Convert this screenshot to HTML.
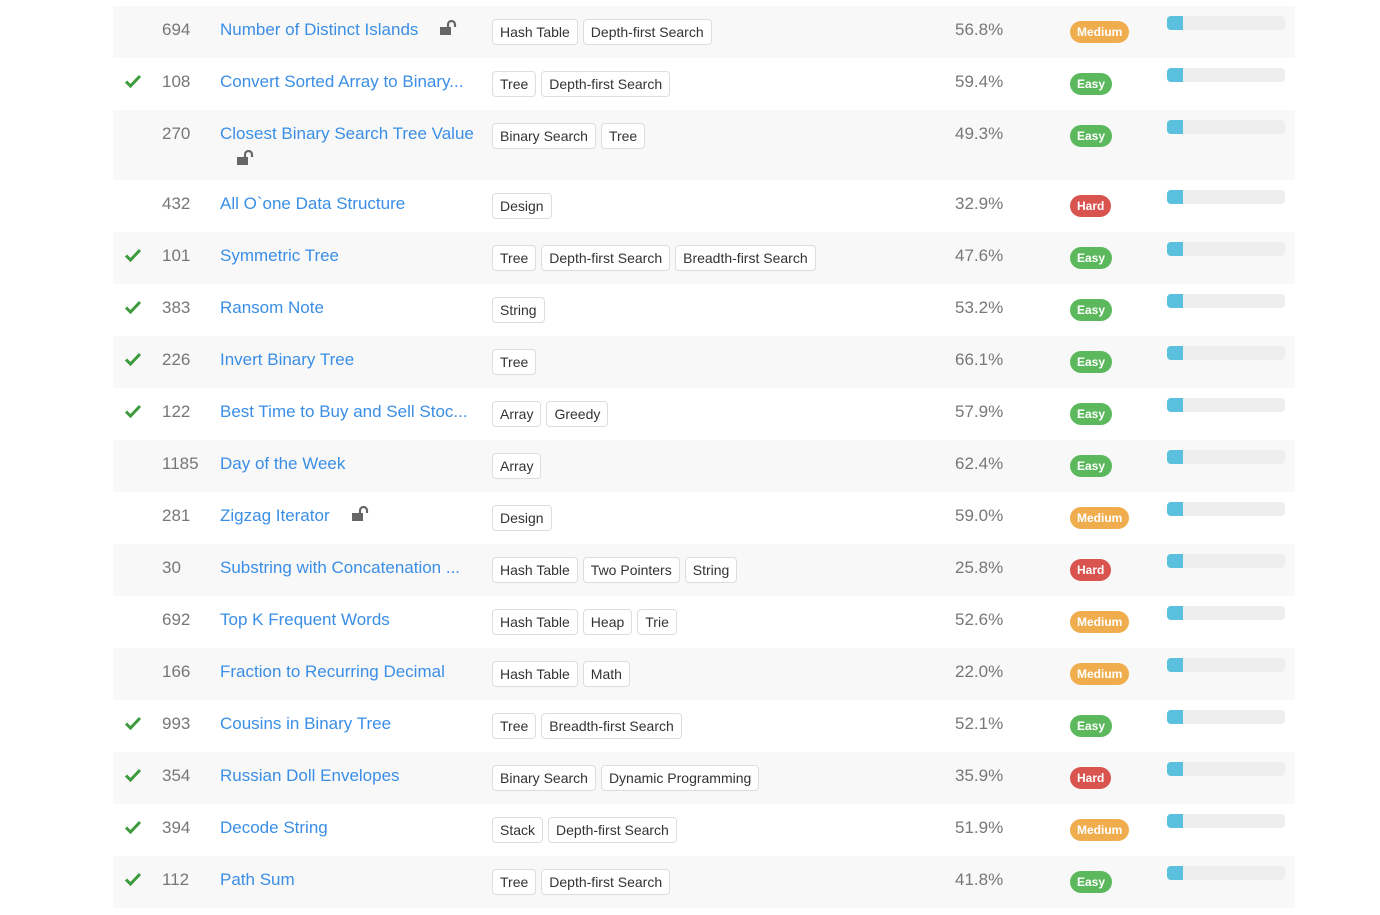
<!DOCTYPE html>
<html><head><meta charset="utf-8"><style>
body{margin:0;background:#fff;font-family:"Liberation Sans",sans-serif;width:1380px;height:915px;overflow:hidden;position:relative}
.row{position:absolute;left:113px;width:1182px;height:52px}
.row.g{background:#f8f8f8}
.chk{position:absolute;left:12px;top:16px}
.num{position:absolute;left:49px;top:14px;font-size:17px;color:#777}
.t{position:absolute;left:107px;top:14px;font-size:17px;color:#3a8ee6;white-space:nowrap}
.lk{display:inline-block;vertical-align:middle;margin-left:22px;margin-top:-6px}
.tags{position:absolute;left:379px;top:13px;display:flex;gap:5px}
.tag{height:24px;line-height:25px;border:1px solid #ddd;border-radius:4px;padding:0 7px;font-size:14px;color:#333;background:#fff}
.ac{position:absolute;left:842px;top:14px;font-size:17px;color:#777}
.b{position:absolute;left:957px;top:15px;height:22px;line-height:23px;border-radius:11px;color:#fff;font-weight:bold;font-size:12px;padding:0 7px}
.M{background:#f0ad4e}.E{background:#5cb85c}.H{background:#d9534f}
.bar{position:absolute;left:1054px;top:10px;width:118px;height:14px;background:#eee;border-radius:4px;overflow:hidden}
.bar i{display:block;width:16px;height:14px;background:#5bc0de}
</style></head><body>
<svg width="0" height="0" style="position:absolute"><defs>
<symbol id="ck" viewBox="0 0 16 14"><path d="M1 7.5l4.5 4.5L15 2" fill="none" stroke="#3c9b3c" stroke-width="3"/></symbol>
<symbol id="lk" viewBox="0 0 18 16"><rect x="0" y="7" width="11" height="8" fill="#666"/><path d="M8 7V4.5a3.5 3.5 0 0 1 7 0V7" fill="none" stroke="#666" stroke-width="2.2"/></symbol>
</defs></svg>

<div class="row g" style="top:6px"><span class="num">694</span><span class="t">Number of Distinct Islands<svg class="lk" width="18" height="16"><use href="#lk"/></svg></span><div class="tags"><span class="tag">Hash Table</span><span class="tag">Depth-first Search</span></div><span class="ac">56.8%</span><span class="b M">Medium</span><div class="bar"><i></i></div></div>

<div class="row" style="top:58px"><svg class="chk" width="16" height="14"><use href="#ck"/></svg><span class="num">108</span><span class="t">Convert Sorted Array to Binary...</span><div class="tags"><span class="tag">Tree</span><span class="tag">Depth-first Search</span></div><span class="ac">59.4%</span><span class="b E">Easy</span><div class="bar"><i></i></div></div>

<div class="row g" style="top:110px;height:70px"><span class="num">270</span><span class="t">Closest Binary Search Tree Value</span><svg style="position:absolute;left:124px;top:40px" width="18" height="16"><use href="#lk"/></svg><div class="tags"><span class="tag">Binary Search</span><span class="tag">Tree</span></div><span class="ac">49.3%</span><span class="b E">Easy</span><div class="bar"><i></i></div></div>

<div class="row" style="top:180px"><span class="num">432</span><span class="t">All O`one Data Structure</span><div class="tags"><span class="tag">Design</span></div><span class="ac">32.9%</span><span class="b H">Hard</span><div class="bar"><i></i></div></div>

<div class="row g" style="top:232px"><svg class="chk" width="16" height="14"><use href="#ck"/></svg><span class="num">101</span><span class="t">Symmetric Tree</span><div class="tags"><span class="tag">Tree</span><span class="tag">Depth-first Search</span><span class="tag">Breadth-first Search</span></div><span class="ac">47.6%</span><span class="b E">Easy</span><div class="bar"><i></i></div></div>

<div class="row" style="top:284px"><svg class="chk" width="16" height="14"><use href="#ck"/></svg><span class="num">383</span><span class="t">Ransom Note</span><div class="tags"><span class="tag">String</span></div><span class="ac">53.2%</span><span class="b E">Easy</span><div class="bar"><i></i></div></div>

<div class="row g" style="top:336px"><svg class="chk" width="16" height="14"><use href="#ck"/></svg><span class="num">226</span><span class="t">Invert Binary Tree</span><div class="tags"><span class="tag">Tree</span></div><span class="ac">66.1%</span><span class="b E">Easy</span><div class="bar"><i></i></div></div>

<div class="row" style="top:388px"><svg class="chk" width="16" height="14"><use href="#ck"/></svg><span class="num">122</span><span class="t">Best Time to Buy and Sell Stoc...</span><div class="tags"><span class="tag">Array</span><span class="tag">Greedy</span></div><span class="ac">57.9%</span><span class="b E">Easy</span><div class="bar"><i></i></div></div>

<div class="row g" style="top:440px"><span class="num">1185</span><span class="t">Day of the Week</span><div class="tags"><span class="tag">Array</span></div><span class="ac">62.4%</span><span class="b E">Easy</span><div class="bar"><i></i></div></div>

<div class="row" style="top:492px"><span class="num">281</span><span class="t">Zigzag Iterator<svg class="lk" width="18" height="16"><use href="#lk"/></svg></span><div class="tags"><span class="tag">Design</span></div><span class="ac">59.0%</span><span class="b M">Medium</span><div class="bar"><i></i></div></div>

<div class="row g" style="top:544px"><span class="num">30</span><span class="t">Substring with Concatenation ...</span><div class="tags"><span class="tag">Hash Table</span><span class="tag">Two Pointers</span><span class="tag">String</span></div><span class="ac">25.8%</span><span class="b H">Hard</span><div class="bar"><i></i></div></div>

<div class="row" style="top:596px"><span class="num">692</span><span class="t">Top K Frequent Words</span><div class="tags"><span class="tag">Hash Table</span><span class="tag">Heap</span><span class="tag">Trie</span></div><span class="ac">52.6%</span><span class="b M">Medium</span><div class="bar"><i></i></div></div>

<div class="row g" style="top:648px"><span class="num">166</span><span class="t">Fraction to Recurring Decimal</span><div class="tags"><span class="tag">Hash Table</span><span class="tag">Math</span></div><span class="ac">22.0%</span><span class="b M">Medium</span><div class="bar"><i></i></div></div>

<div class="row" style="top:700px"><svg class="chk" width="16" height="14"><use href="#ck"/></svg><span class="num">993</span><span class="t">Cousins in Binary Tree</span><div class="tags"><span class="tag">Tree</span><span class="tag">Breadth-first Search</span></div><span class="ac">52.1%</span><span class="b E">Easy</span><div class="bar"><i></i></div></div>

<div class="row g" style="top:752px"><svg class="chk" width="16" height="14"><use href="#ck"/></svg><span class="num">354</span><span class="t">Russian Doll Envelopes</span><div class="tags"><span class="tag">Binary Search</span><span class="tag">Dynamic Programming</span></div><span class="ac">35.9%</span><span class="b H">Hard</span><div class="bar"><i></i></div></div>

<div class="row" style="top:804px"><svg class="chk" width="16" height="14"><use href="#ck"/></svg><span class="num">394</span><span class="t">Decode String</span><div class="tags"><span class="tag">Stack</span><span class="tag">Depth-first Search</span></div><span class="ac">51.9%</span><span class="b M">Medium</span><div class="bar"><i></i></div></div>

<div class="row g" style="top:856px"><svg class="chk" width="16" height="14"><use href="#ck"/></svg><span class="num">112</span><span class="t">Path Sum</span><div class="tags"><span class="tag">Tree</span><span class="tag">Depth-first Search</span></div><span class="ac">41.8%</span><span class="b E">Easy</span><div class="bar"><i></i></div></div>
</body></html>
